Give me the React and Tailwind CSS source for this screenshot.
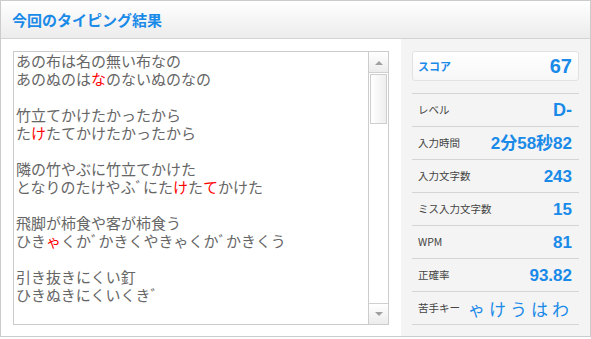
import React from "react";

const jp = { fontFamily: '"Noto Sans CJK JP", "Liberation Sans", sans-serif' };
const R = ({ children }) => <span className="text-[#ff0000]">{children}</span>;

const lines = [
  <>あの布は名の無い布なの</>,
  <>あのぬのは<R>な</R>のないぬのなの</>,
  null,
  <>竹立てかけたかったから</>,
  <>た<R>け</R>たてかけたかったから</>,
  null,
  <>隣の竹やぶに竹立てかけた</>,
  <>となりのたけやふﾞにた<R>け</R>た<R>て</R>かけた</>,
  null,
  <>飛脚が柿食や客が柿食う</>,
  <>ひき<R>ゃ</R>くかﾞかきくやきゃくかﾞかきくう</>,
  null,
  <>引き抜きにくい釘</>,
  <>ひきぬきにくいくきﾞ</>,
];

const rows = [
  ["レベル", "D-", "text-[18px]"],
  ["入力時間", "2分58秒82", "text-[17px]"],
  ["入力文字数", "243", "text-[17px]"],
  ["ミス入力文字数", "15", "text-[17px]"],
  ["WPM", "81", "text-[17px]"],
  ["正確率", "93.82", "text-[17px]"],
];

export default function App() {
  return (
    <div className="w-[591px] h-[337px] border border-[#cccccc] bg-white flex flex-col" style={jp}>
      <div className="h-[38px] shrink-0 border-b border-[#d4d4d4] bg-gradient-to-b from-white to-[#ececec] flex items-center pl-[11px]">
        <span className="text-[15px] font-bold text-[#1a8ae8] leading-none">今回のタイピング結果</span>
      </div>
      <div className="flex flex-1">
        <div className="w-[400px] pl-3 pt-3">
          <div className="w-[376px] h-[274px] border border-[#cccccc] flex">
            <div className="flex-1 pl-[2px] text-[15px] leading-[18px] text-[#666666] overflow-hidden whitespace-nowrap">
              {lines.map((l, i) => (
                <div key={i} className="h-[18px]">{l}</div>
              ))}
            </div>
            <div className="w-[20px] border-l border-[#cccccc] flex flex-col bg-white">
              <div className="h-[21px] border-b border-[#d0d0d0] bg-gradient-to-b from-white to-[#ececec] flex items-center justify-center">
                <svg width="8" height="5" viewBox="0 0 8 5"><path d="M0 5 L4 1 L8 5 Z" fill="#a0a0a0" /></svg>
              </div>
              <div className="pl-[1px] pt-[1px] flex-1">
                <div className="w-[17px] h-[50px] border border-[#cfcfcf] bg-gradient-to-r from-white to-[#eeeeee]" />
              </div>
              <div className="h-[21px] border-t border-[#d0d0d0] bg-gradient-to-b from-white to-[#ececec] flex items-center justify-center">
                <svg width="8" height="5" viewBox="0 0 8 5"><path d="M0 0 L4 4 L8 0 Z" fill="#a0a0a0" /></svg>
              </div>
            </div>
          </div>
        </div>
        <div className="flex-1 bg-[#f4f4f4] px-[11px] pt-3">
          <div className="h-[30px] rounded-[3px] border border-[#e2e2e2] bg-gradient-to-b from-white to-[#f7f7f7] flex items-center justify-between pl-[5px] pr-[6px]">
            <span className="text-[11px] font-bold text-[#1a8ae8]">スコア</span>
            <span className="text-[20px] font-bold text-[#1a8ae8] leading-none" style={{ fontFamily: '"Liberation Sans", sans-serif' }}>67</span>
          </div>
          <div className="mt-[12px] border-t border-[#d4d4d4]">
            {rows.map(([k, v, s]) => (
              <div key={k} className="h-[33px] border-b border-[#d4d4d4] flex items-center justify-between pl-[6px] pr-[7px]">
                <span className="text-[10.5px] text-[#444444]">{k}</span>
                <span className={`${s} font-bold text-[#1a8ae8] leading-none`} style={{ fontFamily: '"Liberation Sans", "Noto Sans CJK JP", sans-serif' }}>{v}</span>
              </div>
            ))}
            <div className="h-[33px] border-b border-[#d4d4d4] flex items-center justify-between pl-[6px] pr-[6px]">
              <span className="text-[10.5px] text-[#444444]">苦手キー</span>
              <span className="text-[17px] text-[#1a8ae8] leading-none tracking-[4px]">ゃけうはわ</span>
            </div>
          </div>
        </div>
      </div>
    </div>
  );
}
